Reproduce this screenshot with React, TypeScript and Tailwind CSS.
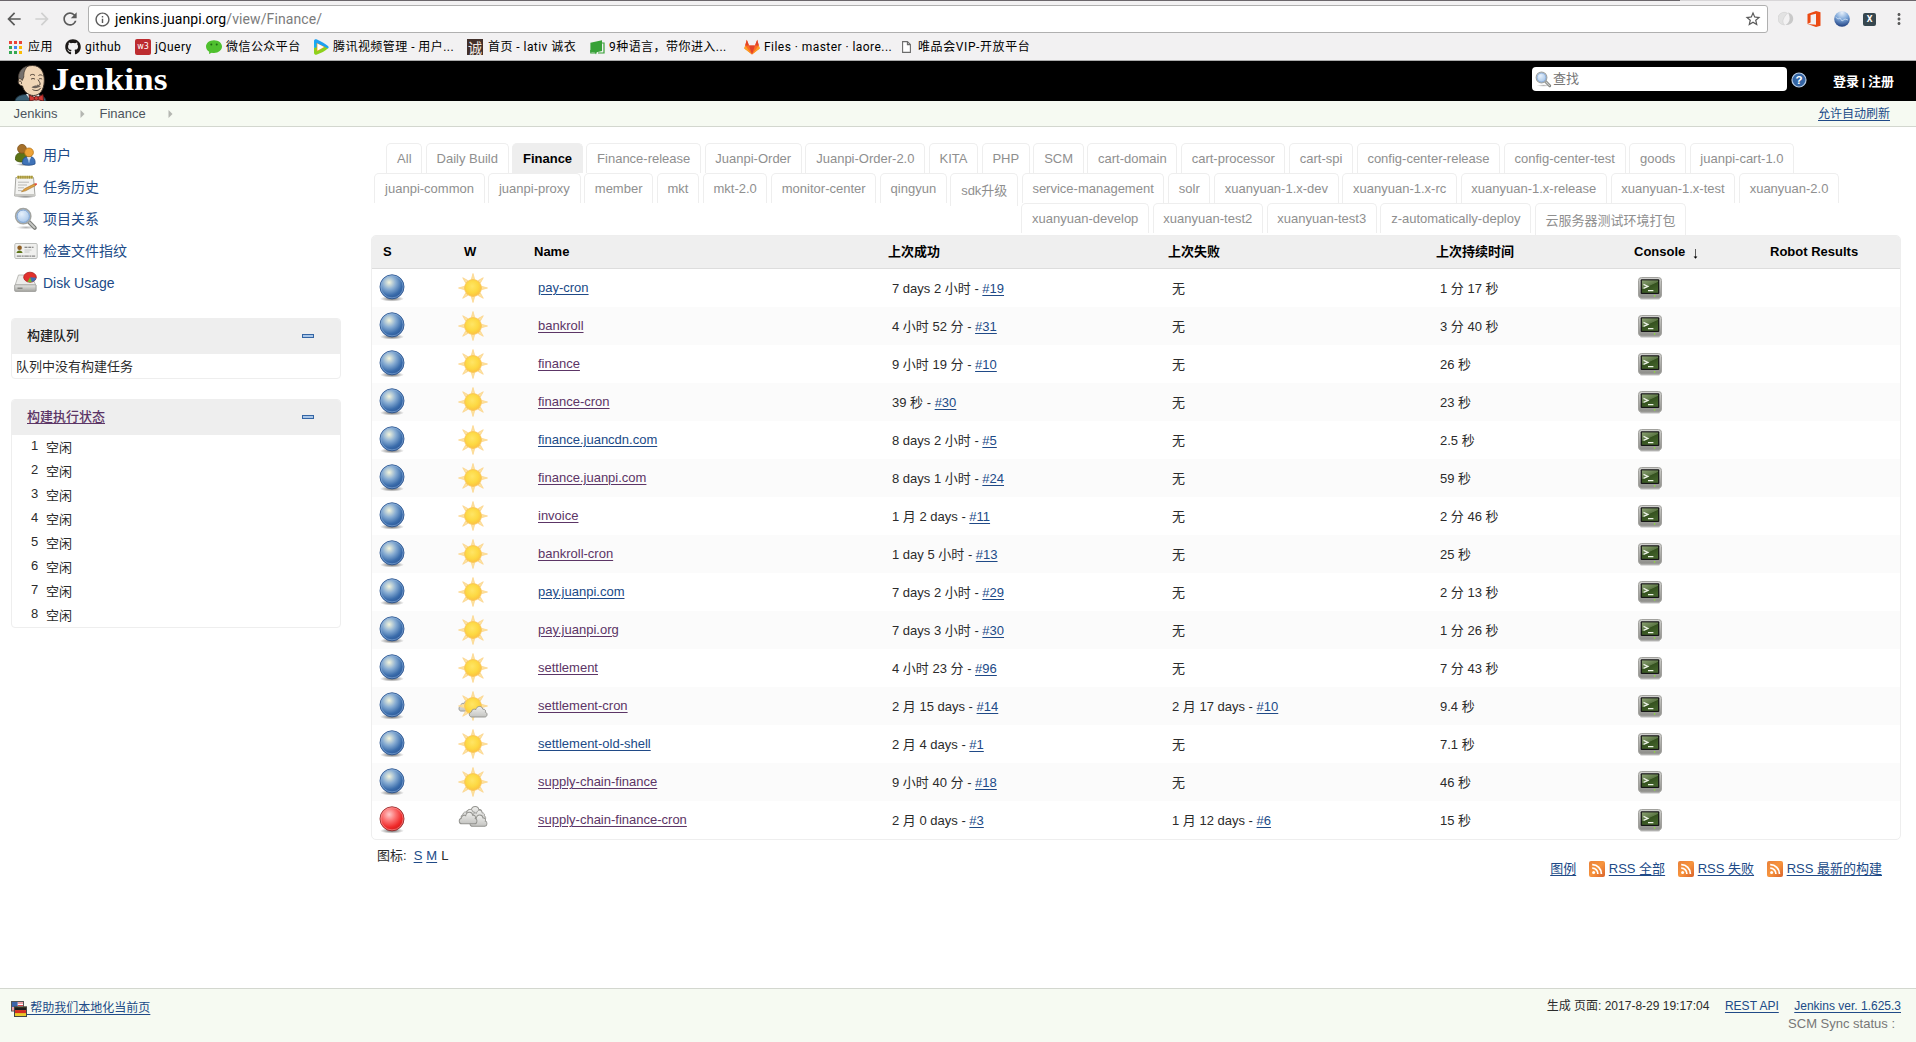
import React from "react";
import { FaGithub } from "react-icons/fa";
import { MdArrowBack, MdArrowForward, MdRefresh, MdOutlineInfo, MdStarBorder, MdMoreVert } from "react-icons/md";

const UI = "font-['Roboto','Noto_Sans_CJK_SC',sans-serif]";

/* ---------- icons ---------- */

const Defs = () => (
  <svg width="0" height="0" className="absolute">
    <defs>
      <radialGradient id="blue" cx="0.38" cy="0.32" r="0.72">
        <stop offset="0" stopColor="#f4f5dc" />
        <stop offset="0.4" stopColor="#86abd2" />
        <stop offset="0.75" stopColor="#3a6cab" />
        <stop offset="1" stopColor="#2a5596" />
      </radialGradient>
      <radialGradient id="red" cx="0.38" cy="0.32" r="0.72">
        <stop offset="0" stopColor="#ffc9c9" />
        <stop offset="0.4" stopColor="#fb6e6e" />
        <stop offset="0.75" stopColor="#ef2929" />
        <stop offset="1" stopColor="#cc1a1a" />
      </radialGradient>
      <radialGradient id="shade" cx="0.5" cy="0.5" r="0.5">
        <stop offset="0" stopColor="#000" stopOpacity="0.6" />
        <stop offset="1" stopColor="#000" stopOpacity="0" />
      </radialGradient>
      <radialGradient id="sun" cx="0.45" cy="0.4" r="0.6">
        <stop offset="0" stopColor="#ffe566" />
        <stop offset="0.6" stopColor="#fdd943" />
        <stop offset="1" stopColor="#fbc23f" />
      </radialGradient>
      <linearGradient id="cloud" x1="0" y1="0" x2="0" y2="1">
        <stop offset="0" stopColor="#f0f0ee" />
        <stop offset="1" stopColor="#c4c4c1" />
      </linearGradient>
      <linearGradient id="screen" x1="0" y1="0" x2="0.6" y2="1">
        <stop offset="0" stopColor="#8ba173" />
        <stop offset="0.5" stopColor="#5d7846" />
        <stop offset="0.55" stopColor="#35521f" />
        <stop offset="1" stopColor="#43632b" />
      </linearGradient>
      <linearGradient id="rss" x1="0" y1="0" x2="1" y2="1">
        <stop offset="0" stopColor="#e8803a" />
        <stop offset="0.5" stopColor="#f7943d" />
        <stop offset="1" stopColor="#d9622b" />
      </linearGradient>
      <linearGradient id="metal" x1="0" y1="0" x2="0" y2="1">
        <stop offset="0" stopColor="#e8e8e6" />
        <stop offset="1" stopColor="#a4a4a0" />
      </linearGradient>
      <linearGradient id="bezel" x1="0" y1="0" x2="0" y2="1">
        <stop offset="0" stopColor="#d2d2cf" />
        <stop offset="1" stopColor="#8c8c88" />
      </linearGradient>
      <radialGradient id="lens" cx="0.4" cy="0.35" r="0.7">
        <stop offset="0" stopColor="#e6f0fb" />
        <stop offset="1" stopColor="#9dbfe6" />
      </radialGradient>
      <radialGradient id="globe" cx="0.5" cy="0.1" r="0.9">
        <stop offset="0" stopColor="#e8f1fb" />
        <stop offset="0.5" stopColor="#7ba5d8" />
        <stop offset="1" stopColor="#1f3f80" />
      </radialGradient>
    </defs>
  </svg>
);

const Ball = ({ red }: { red?: boolean }) => (
  <svg width="28" height="30" viewBox="0 0 28 30">
    <ellipse cx="14" cy="25.8" rx="12" ry="2.8" fill="url(#shade)" />
    <circle cx="14" cy="13.8" r="12" fill={red ? "url(#red)" : "url(#blue)"} stroke={red ? "#8f2a2a" : "#2b5590"} strokeWidth="0.9" />
    <circle cx="14" cy="13.8" r="11.1" fill="none" stroke={red ? "#ff9c9c" : "#8fb3dc"} strokeWidth="0.8" opacity="0.75" />
  </svg>
);

const SunShape = () => (
  <g>
    {[0, 45, 90, 135, 180, 225, 270, 315].map((a) => (
      <path key={a} d="M13.3 6.5 L15 0.5 L16.7 6.5 Z" fill="#fde3a0" stroke="#fcd58c" strokeWidth="0.8" transform={`rotate(${a} 15 15)`} />
    ))}
    <circle cx="15" cy="15" r="8.4" fill="url(#sun)" stroke="#f9c65a" strokeWidth="0.9" />
  </g>
);

const CLOUD = "M4 12 C1 12 0.5 8 3.5 7.2 C3.5 4.6 6.8 4 7.8 5 C8.6 1 14 1 14.6 4.6 C17 4.2 17.8 6.4 17 7.4 C19.6 8 19 12 16.5 12 Z";
const Cloud = ({ t }: { t: string }) => <path d={CLOUD} fill="url(#cloud)" stroke="#93938f" strokeWidth="0.9" transform={t} />;

const Weather = ({ kind }: { kind: string }) => (
  <svg width="30" height="30" viewBox="0 0 30 30">
    {kind === "sun" && <SunShape />}
    {kind === "partly" && (
      <g>
        <Cloud t="translate(-0.2 7.5) scale(0.8 1.05)" />
        <SunShape />
        <Cloud t="translate(9.8 13.4) scale(1.03 1.05)" />
      </g>
    )}
    {kind === "cloud" && (
      <g>
        <Cloud t="translate(4.5 -0.8) scale(1.12 1.2)" />
        <Cloud t="translate(1.8 2.4) scale(0.9 1)" />
        <Cloud t="translate(11.8 3.4) scale(0.85 1)" />
        <Cloud t="translate(10.5 7.8) scale(0.99 1.12)" />
        <Cloud t="translate(-0.3 5) scale(1.03 1.15)" />
      </g>
    )}
  </svg>
);

const Terminal = () => (
  <svg width="24" height="23" viewBox="0 0 24 23">
    <rect x="2" y="19.5" width="20" height="3" rx="1.5" fill="#000" opacity="0.25" />
    <rect x="0.5" y="0.5" width="23" height="20.5" rx="3" fill="url(#bezel)" stroke="#a2a29e" />
    <rect x="2.7" y="2.2" width="18.6" height="14.8" rx="1" fill="#151515" />
    <rect x="3.9" y="3.4" width="16.2" height="12.4" fill="url(#screen)" />
    <path d="M5.5 7.4 L10 9.4 L5.5 11.4 M10 13.6 H15.4" stroke="#eef3e8" strokeWidth="1.2" fill="none" />
    <circle cx="16.6" cy="18.9" r="0.8" fill="#8ae234" />
  </svg>
);

const Rss = () => (
  <svg width="16" height="16" viewBox="0 0 16 16">
    <rect width="16" height="16" rx="2" fill="url(#rss)" />
    <circle cx="4.6" cy="11.6" r="1.5" fill="#fff" />
    <path d="M3.2 7.2 A5.6 5.6 0 0 1 8.9 13 M3.2 3.7 A9.1 9.1 0 0 1 12.4 13" stroke="#fff" strokeWidth="1.7" fill="none" />
  </svg>
);

const Users = () => (
  <svg width="24" height="24" viewBox="0 0 24 24">
    <ellipse cx="12" cy="21.5" rx="10" ry="1.6" fill="url(#shade)" />
    <path d="M1.5 17 C1 11.5 4 9.5 8 9.5 C12 9.5 14 12 14 18 C9 19.5 4 19.5 1.5 17Z" fill="#5c7416" stroke="#42560c" strokeWidth="0.8" />
    <circle cx="8" cy="5.8" r="4.4" fill="#a5702a" stroke="#7d5116" strokeWidth="0.8" />
    <path d="M8.6 21 C8 15.5 10.6 13.5 15 13.5 C19.4 13.5 21.6 16 21 21 C17.5 22.6 12 22.6 8.6 21Z" fill="#3f73b8" stroke="#25518f" strokeWidth="0.8" />
    <path d="M13 13.8 L15 20 L17 13.8Z" fill="#f3f6fa" />
    <path d="M15 14.5 L15.7 18 L15 20 L14.3 18Z" fill="#6f9bd1" />
    <circle cx="15" cy="9.4" r="4.4" fill="#eda338" stroke="#b87414" strokeWidth="0.8" />
  </svg>
);

const Notepad = () => (
  <svg width="24" height="24" viewBox="0 0 24 24">
    <ellipse cx="11.5" cy="21.8" rx="10" ry="1.2" fill="url(#shade)" />
    <path d="M1.8 2.5 H19.5 L21 21 H0.7Z" fill="#f3f3f1" stroke="#a6a6a2" />
    <path d="M1 19 H20.8 V21 H0.7Z" fill="#c9c9c5" />
    <rect x="3" y="0.8" width="16" height="2.8" fill="#c4b45a" />
    <path d="M4.5 .8v2.8M6.7 .8v2.8M8.9 .8v2.8M11.1 .8v2.8M13.3 .8v2.8M15.5 .8v2.8M17.7 .8v2.8" stroke="#8e8030" strokeWidth="0.7" />
    <path d="M4 7.2h11M4 10h9M4 12.8h6M4 15.6h4" stroke="#b9b9b5" strokeWidth="1" />
    <path d="M7.5 16.8 L10.5 13.8 L20.5 8.8 L21.6 10.6 L11.6 15.8Z" fill="#e0a244" stroke="#a06c20" strokeWidth="0.6" />
    <path d="M20.3 8.8 L22.3 8 L23.1 9.4 L21.6 10.6Z" fill="#e5433a" />
  </svg>
);

const Magnifier = ({ size }: { size: number }) => (
  <svg width={size} height={size} viewBox="0 0 24 24" className="shrink-0">
    <ellipse cx="12" cy="20.5" rx="10" ry="1.8" fill="url(#shade)" opacity="0.5" />
    <path d="M14.5 14.5 L20.8 20.8" stroke="#7a7c79" strokeWidth="4" strokeLinecap="round" />
    <path d="M15.5 15.5 L20.6 20.6" stroke="#c9cac7" strokeWidth="1.8" strokeLinecap="round" />
    <circle cx="9.2" cy="9.2" r="7.6" fill="url(#lens)" stroke="#a2a4a1" strokeWidth="1.6" />
    <circle cx="9.2" cy="9.2" r="6.2" fill="none" stroke="#7fa3d1" strokeWidth="1" />
  </svg>
);

const Card = () => (
  <svg width="24" height="24" viewBox="0 0 24 24">
    <rect x="0.8" y="4.5" width="22.4" height="15" rx="1.2" fill="#f0f0ee" stroke="#bcbebb" />
    <path d="M2.5 14 C2.5 10.5 8.5 10.5 8.5 14Z" fill="#5c7416" />
    <circle cx="5.6" cy="8.8" r="2.3" fill="#8f5f24" />
    <path d="M10.5 8.2h9" stroke="#666" strokeWidth="1.1" strokeDasharray="3 0.8" />
    <path d="M10.5 11h7M10.5 13h5" stroke="#c1c2bf" strokeWidth="0.9" />
    <path d="M2.8 17.2h18.4" stroke="#888" strokeWidth="1.3" strokeDasharray="4.5 0.6 1.8 0.6" />
  </svg>
);

const Disk = () => (
  <svg width="24" height="24" viewBox="0 0 24 24">
    <path d="M4.5 4 H17 L22 14.5 H1Z" fill="#ececea" stroke="#b4b4b0" strokeWidth="0.9" />
    <rect x="0.7" y="13.8" width="21.4" height="6.6" rx="0.8" fill="url(#metal)" stroke="#9b9b97" strokeWidth="0.9" />
    <path d="M3.5 17.2 h5" stroke="#70706c" strokeWidth="1.1" />
    <ellipse cx="16" cy="6.2" rx="6.3" ry="5" fill="#e2302d" stroke="#a81f1f" strokeWidth="0.8" />
    <path d="M16 6.2 L22.2 6.8 A6.3 5 0 0 1 17.5 11Z" fill="#3c6fb6" />
    <path d="M16 6.2 L17.8 11 A6.3 5 0 0 1 13.6 10.8Z" fill="#73b62c" />
  </svg>
);

const Flags = () => (
  <svg width="16" height="16" viewBox="0 0 16 16">
    <rect x="0.5" y="0.5" width="12" height="9.5" fill="#fff" stroke="#555" />
    <path d="M6.5 2h5.5M6.5 4.5h5.5M1 7h11M1 9h11" stroke="#d8434a" strokeWidth="1.2" />
    <rect x="1" y="1" width="5.6" height="5" fill="#3a63a8" />
    <rect x="3.5" y="5.8" width="12" height="9.7" fill="#e9c92c" stroke="#444" />
    <rect x="4" y="6.2" width="11" height="3" fill="#1b1b1b" />
    <rect x="4" y="9.1" width="11" height="3" fill="#d42b22" />
  </svg>
);

const Butler = () => (
  <svg width="34" height="37" viewBox="0 0 34 37">
    <path d="M1 37 C2 32.5 6 31 11 30.5 L24 31 C28 31 31 32.5 32 37Z" fill="#3b5f73" stroke="#1d2f3a" strokeWidth="0.9" />
    <path d="M12 30 L17 37 H26 L25 30Z" fill="#e9eef0" />
    <path d="M4.5 16 C4 7 10 1.5 18.5 1.5 C27 1.5 30.5 8.5 30.3 17 C30 26 26 31.5 19.5 31.5 C14 31.5 9.5 27 8.5 22 C5 21.5 3.5 18.5 4.5 16Z" fill="#f0d6b7" stroke="#3a3028" strokeWidth="1" />
    <path d="M4.8 15 C3.5 8.5 8 3 14 2 C10.5 5 9.6 9 9.8 13 L8.2 16.5 C7.4 14.8 5.6 14.4 4.8 15Z" fill="#75706d" stroke="#3a3028" strokeWidth="0.7" />
    <path d="M5 17.5c1.6-1.2 3 .6 2.4 2.4M16 11.5c1.6-1.5 3.6-1.4 5 0M24.5 11.5c1.4-1 2.8-.8 4 .2M17 15.2c1.4-.9 2.8-.9 4 0M25 15c1-.6 2.2-.5 3.2.2M24 15.5c1.6 2.6 3 4.4 1.6 5.6-.8.6-1.8.3-2.6 0M18.5 25.5c2.6 1.6 6.5 1.4 8.2-1.6" stroke="#3a3028" strokeWidth="0.9" fill="none" />
    <path d="M17.5 23.5 C20 20.8 24.5 21.2 27 22.6 C24 24 21 24.8 17.5 23.5Z" fill="#6d625a" />
    <path d="M15 31 L22 34 L29 30.5 L29.5 37 L22.5 35.5 L15.8 37Z" fill="#d33833" stroke="#5a1512" strokeWidth="0.9" />
    <circle cx="22.3" cy="34.3" r="2" fill="#d33833" stroke="#5a1512" strokeWidth="0.8" />
  </svg>
);

const Minus = () => (
  <svg width="12" height="4" viewBox="0 0 12 4">
    <rect x="0.5" y="0.5" width="11" height="3" fill="#a9c6e8" stroke="#3465a4" />
  </svg>
);

const Crumb = () => (
  <svg width="5" height="8" viewBox="0 0 5 8">
    <path d="M0.5 0 L4.5 4 L0.5 8Z" fill="#b4b6b1" />
  </svg>
);

/* ---------- browser chrome ---------- */

const AppsGrid = () => {
  const c = ["#ea4335", "#ea4335", "#ea4335", "#34a853", "#4285f4", "#fbbc05", "#34a853", "#34a853", "#fbbc05"];
  return (
    <svg width="13" height="13" viewBox="0 0 13 13">
      {c.map((f, i) => (
        <rect key={i} x={(i % 3) * 5} y={Math.floor(i / 3) * 5} width="3" height="3" fill={f} />
      ))}
    </svg>
  );
};

const Wechat = () => (
  <svg width="16" height="16" viewBox="0 0 16 16">
    <path d="M8 1.2 C12.6 1.2 16 4 16 7.6 C16 11.2 12.6 14 8 14 C7.2 14 6.4 13.9 5.7 13.8 L3 15 L3.2 12.8 C1.2 11.6 0 9.7 0 7.6 C0 4 3.4 1.2 8 1.2Z" fill="#4fc02e" />
    <circle cx="5.3" cy="5.6" r="1" fill="#1f6a12" />
    <circle cx="10.7" cy="5.6" r="1" fill="#1f6a12" />
  </svg>
);

const Tencent = () => (
  <svg width="16" height="16" viewBox="0 0 16 16">
    <path d="M1 2 C1 .4 2.6 0 4 .6 C8 2.4 12 4.6 15 7 C16 7.8 15.8 8.8 15 9.4 L9 9 L1.5 8Z" fill="#1ea1f2" />
    <path d="M1 2 L1.2 12 L5 8Z" fill="#12b0f5" />
    <path d="M15 9.3 C12 12 8 14.2 4 15.6 C2.4 16.2 1.2 15.4 1 14 L1 9 L9 7Z" fill="#8ed11c" />
    <path d="M3.6 4 L12 8 L3.8 12.6Z" fill="#f79a1c" />
    <path d="M4.4 4.6 L11 8.1 L4.4 11.8Z" fill="#fff" />
  </svg>
);

const Gitlab = () => (
  <svg width="16" height="16" viewBox="0 0 16 16">
    <path d="M8 15.4 L0.3 9.6 L2.8 0.8 L5 6.4 H11 L13.2 0.8 L15.7 9.6Z" fill="#fc6d26" />
    <path d="M8 15.4 L5 6.4 H11Z" fill="#e24329" />
    <path d="M8 15.4 L0.3 9.6 L1.2 6.4Z M8 15.4 L15.7 9.6 L14.8 6.4Z" fill="#fca326" />
    <path d="M1.2 6.4 L2.8 0.8 L5 6.4Z M14.8 6.4 L13.2 0.8 L11 6.4Z" fill="#e24329" />
  </svg>
);

const bookmarks: { icon: React.ReactNode; label: string; box: string }[] = [
  { icon: <AppsGrid />, label: "应用", box: "w-[56px] gap-[6px]" },
  { icon: <FaGithub size={16} color="#1b1817" />, label: "github", box: "w-[70px] gap-[4px]" },
  {
    icon: (
      <span className="flex size-4 items-center justify-center rounded-[2px] bg-[#bd2c30] font-['DejaVu_Sans'] text-[8px] leading-none tracking-normal text-white">w3</span>
    ),
    label: "jQuery",
    box: "w-[71px] gap-[4px]",
  },
  { icon: <Wechat />, label: "微信公众平台", box: "w-[107px] gap-[4px]" },
  { icon: <Tencent />, label: "腾讯视频管理 - 用户...", box: "w-[154px] gap-[4px]" },
  {
    icon: (
      <span className="flex size-4 items-center justify-center bg-[#42302a] font-['Noto_Sans_CJK_SC'] text-[14px] leading-[16px] tracking-normal text-[#efe9e4]">诚</span>
    ),
    label: "首页 - lativ 诚衣",
    box: "w-[123px] gap-[5px]",
  },
  {
    icon: (
      <svg width="15" height="15" viewBox="0 0 15 15">
        <path d="M11 3 H14 V13 H8 M0.8 10 V13 H6" fill="none" stroke="#37a137" strokeWidth="1.2" />
        <path d="M0.4 2.8 L12 0.2 V11 L6.8 12.2 L6 14.6 L5 12.5 L0.4 12Z" fill="#37a137" />
      </svg>
    ),
    label: "9种语言，带你进入...",
    box: "w-[154px] gap-[4px]",
  },
  { icon: <Gitlab />, label: "Files · master · laore...", box: "w-[158px] gap-[4px]" },
  {
    icon: (
      <svg width="9" height="12" viewBox="0 0 9 12">
        <path d="M0.6 0.6 H5.4 L8.4 3.6 V11.4 H0.6Z M5.4 0.6 V3.6 H8.4" fill="#fff" stroke="#6b6b6b" strokeWidth="1.1" />
      </svg>
    ),
    label: "唯品会VIP-开放平台",
    box: "gap-[7px] tracking-[0.6px]",
  },
];

const Browser = () => (
  <div className={`${UI} h-[61px] border-b border-[#ababab] bg-[#f2f1f2]`}>
    <div className="flex h-px">
      <div className="w-[1680px] bg-[#6b666b]" />
      <div className="w-[160px] bg-[#d8d6d8]" />
      <div className="flex-1 bg-[#6b666b]" />
    </div>
    <div className="flex h-[36px] items-center text-[#5a5a5a]">
      <div className="flex w-[88px] items-center gap-[8px] pl-[4px]">
        <MdArrowBack size={20} />
        <MdArrowForward size={20} className="text-[#d0d0d0]" />
        <MdRefresh size={20} />
      </div>
      <div className="flex h-[28px] w-[1680px] items-center rounded-[3px] border border-[#b0b0b0] bg-white pr-[5px] pl-[5px]">
        <MdOutlineInfo size={17} />
        <span className="ml-[4px] flex-1 text-[14px] leading-[20px] tracking-[0.1px] text-[#7b7b7b]">
          <span className="text-black">jenkins.juanpi.org</span>/view/Finance/
        </span>
        <MdStarBorder size={18} />
      </div>
      <div className="flex items-center pl-[10px]">
        <svg width="16" height="16" viewBox="0 0 16 16" className="mr-[13px]">
          <path d="M9.5 2.2 A6 6 0 0 0 3 13 L6.5 14 C4.6 12 4.4 10 5.4 8 C6.3 6 7.6 4 9.5 2.2Z" fill="#e2e2e2" stroke="#cfcfcf" strokeWidth="0.6" />
          <path d="M10 1.5 C14 2.5 16 6 15 9.5 C14 12.6 11 14.4 7.5 14 C10 12.6 11.6 10.4 11.6 7.6 C11.6 5.4 11 3.4 10 1.5Z" fill="#c9c9c9" />
        </svg>
        <svg width="14" height="16" viewBox="0 0 14 16" className="mr-[13px]">
          <path d="M0.5 3 L9 0 L13.5 1.3 V14.7 L9 16 L0.5 13 L9 13.8 V2.8 L3.6 4.1 V11.6 L0.5 13Z" fill="#eb4b14" />
        </svg>
        <svg width="16" height="16" viewBox="0 0 16 16" className="mr-[13px]">
          <circle cx="8" cy="8" r="7.8" fill="url(#globe)" />
          <path d="M1.5 6 L4 8 L6 7 L8 10 L11 8 L14 9" stroke="#dbe8f7" fill="none" opacity="0.7" />
        </svg>
        <span className="mr-[14px] flex size-[13px] items-center justify-center rounded-[2px] bg-[#37474f] text-[9px] leading-none font-bold text-white">X</span>
        <MdMoreVert size={18} />
      </div>
    </div>
    <div className="flex h-[20px] items-center pl-[9px] text-[12px] leading-[20px] tracking-[0.45px] text-black">
      {bookmarks.map((b) => (
        <div key={b.label} className={`${b.box} flex shrink-0 items-center whitespace-nowrap`}>
          <span className="shrink-0">{b.icon}</span>
          <span>{b.label}</span>
        </div>
      ))}
    </div>
  </div>
);

/* ---------- page data ---------- */

const tabRows: string[][] = [
  ["All", "Daily Build", "Finance", "Finance-release", "Juanpi-Order", "Juanpi-Order-2.0", "KITA", "PHP", "SCM", "cart-domain", "cart-processor", "cart-spi", "config-center-release", "config-center-test", "goods", "juanpi-cart-1.0"],
  ["juanpi-common", "juanpi-proxy", "member", "mkt", "mkt-2.0", "monitor-center", "qingyun", "sdk升级", "service-management", "solr", "xuanyuan-1.x-dev", "xuanyuan-1.x-rc", "xuanyuan-1.x-release", "xuanyuan-1.x-test", "xuanyuan-2.0"],
  ["xuanyuan-develop", "xuanyuan-test2", "xuanyuan-test3", "z-automatically-deploy", "云服务器测试环境打包"],
];
const rowPad = ["pl-[15.4px]", "pl-[3.4px]", "pl-[650.4px]"];

type Job = { n: string; v?: boolean; ok: [string, string]; bad?: [string, string]; d: string; w?: string; red?: boolean };
const jobs: Job[] = [
  { n: "pay-cron", ok: ["7 days 2 小时", "#19"], d: "1 分 17 秒" },
  { n: "bankroll", v: true, ok: ["4 小时 52 分", "#31"], d: "3 分 40 秒" },
  { n: "finance", v: true, ok: ["9 小时 19 分", "#10"], d: "26 秒" },
  { n: "finance-cron", v: true, ok: ["39 秒", "#30"], d: "23 秒" },
  { n: "finance.juancdn.com", ok: ["8 days 2 小时", "#5"], d: "2.5 秒" },
  { n: "finance.juanpi.com", v: true, ok: ["8 days 1 小时", "#24"], d: "59 秒" },
  { n: "invoice", v: true, ok: ["1 月 2 days", "#11"], d: "2 分 46 秒" },
  { n: "bankroll-cron", v: true, ok: ["1 day 5 小时", "#13"], d: "25 秒" },
  { n: "pay.juanpi.com", ok: ["7 days 2 小时", "#29"], d: "2 分 13 秒" },
  { n: "pay.juanpi.org", v: true, ok: ["7 days 3 小时", "#30"], d: "1 分 26 秒" },
  { n: "settlement", v: true, ok: ["4 小时 23 分", "#96"], d: "7 分 43 秒" },
  { n: "settlement-cron", v: true, ok: ["2 月 15 days", "#14"], bad: ["2 月 17 days", "#10"], d: "9.4 秒", w: "partly" },
  { n: "settlement-old-shell", ok: ["2 月 4 days", "#1"], d: "7.1 秒" },
  { n: "supply-chain-finance", v: true, ok: ["9 小时 40 分", "#18"], d: "46 秒" },
  { n: "supply-chain-finance-cron", v: true, ok: ["2 月 0 days", "#3"], bad: ["1 月 12 days", "#6"], d: "15 秒", w: "cloud", red: true },
];

const COLS = "grid grid-cols-[81px_70px_355px_280px_268px_197px_136px_1fr] items-center";
const link = "text-[#204a87] underline underline-offset-2";

const Build = ({ b }: { b: [string, string] }) => (
  <span>
    {b[0]} - <a className={link}>{b[1]}</a>
  </span>
);

const tasks = [
  { icon: <Users />, label: "用户" },
  { icon: <Notepad />, label: "任务历史" },
  { icon: <Magnifier size={24} />, label: "项目关系" },
  { icon: <Card />, label: "检查文件指纹" },
  { icon: <Disk />, label: "Disk Usage" },
];

const Sidebar = () => (
  <aside className="w-[371px] shrink-0 pl-[11px]">
    <nav className="pt-[12px]">
      {tasks.map((t) => (
        <div key={t.label} className="flex h-8 items-center gap-[5px] pl-[3px] text-[14px] text-[#204a87]">
          {t.icon}
          <span>{t.label}</span>
        </div>
      ))}
    </nav>
    <section className="mt-[19px] w-[330px] overflow-hidden rounded border border-[#eee]">
      <div className="flex h-[35px] items-center justify-between bg-[#eee] pr-[26px] pb-px pl-[15px] font-medium text-[#222]">
        构建队列
        <Minus />
      </div>
      <div className="h-[24px] pl-[4px] leading-[25px]">队列中没有构建任务</div>
    </section>
    <section className="mt-[20px] w-[330px] overflow-hidden rounded border border-[#eee]">
      <div className="flex h-[35px] items-center justify-between bg-[#eee] pr-[26px] pb-px pl-[15px] font-medium">
        <a className="text-[#5c3566] underline underline-offset-2">构建执行状态</a>
        <Minus />
      </div>
      <div className="h-[192px]">
        {[1, 2, 3, 4, 5, 6, 7, 8].map((n) => (
          <div key={n} className="flex h-[24px] pl-[19px] leading-[22px]">
            <span className="w-[15px]">{n}</span>
            <span className="pt-[2px]">空闲</span>
          </div>
        ))}
      </div>
    </section>
  </aside>
);

const tabClass = (label: string) => {
  if (label === "Finance") return "h-[30px] border-[#eee] bg-[#eee] font-bold text-black";
  if (label === "sdk升级") return "h-[33px] border-[#eee] pt-[2px] text-[#8f8f8f]";
  if (label.startsWith("云")) return "h-[32px] border-[#eee] pt-[2px] text-[#8f8f8f]";
  return "h-[30px] border-[#eee] text-[#8f8f8f]";
};

const Tabs = () => (
  <div className="pt-[16px]">
    {tabRows.map((row, i) => (
      <div key={i} className={`${rowPad[i]} flex h-[30px] items-start gap-[3.6px]`}>
        {row.map((t) => (
          <span key={t} className={`${tabClass(t)} rounded-t-[5px] border border-b-0 px-[9.71px] leading-[29px] whitespace-nowrap`}>
            {t}
          </span>
        ))}
      </div>
    ))}
  </div>
);

export default function App() {
  return (
    <div className="flex h-[1042px] w-[1916px] flex-col overflow-hidden bg-white font-['Liberation_Sans','Noto_Sans_CJK_SC',sans-serif] text-[13px] leading-[18px] text-[#2b2b2b]">
      <Defs />
      <Browser />

      <header className="flex h-[40px] items-start bg-black">
        <div className="flex h-[40px] w-[1532px] items-end pl-[14px]">
          <Butler />
          <svg width="122" height="40" viewBox="0 0 122 40" className="ml-[2px]">
            <text x="1.5" y="28.8" textLength="116" lengthAdjust="spacingAndGlyphs" fill="#fff" fontFamily="Liberation Serif" fontWeight="700" fontSize="31">
              Jenkins
            </text>
          </svg>
        </div>
        <div className="mt-[6px] flex h-[24px] w-[255px] items-center gap-px rounded-[4px] bg-white pl-[3px] text-[#757575]">
          <Magnifier size={17} />
          查找
        </div>
        <svg width="16" height="16" viewBox="0 0 16 16" className="mt-[11px] ml-[4px]">
          <circle cx="8" cy="8" r="7" fill="#3465a4" stroke="#b9cde6" strokeWidth="1.2" />
          <text x="8" y="12" textAnchor="middle" fill="#fff" fontFamily="Liberation Sans" fontWeight="700" fontSize="11.5">
            ?
          </text>
        </svg>
        <div className="ml-[26px] flex h-[42px] items-center gap-[3px] font-bold text-white">
          <span>登录</span>
          <span className="text-[11px]">|</span>
          <span>注册</span>
        </div>
      </header>

      <div className="flex h-[26px] items-center border-b border-[#d3d7cf] bg-[#f6faf2] pr-[26px] pl-[13.5px] text-[#4d545d]">
        <span className="w-[66.5px]">Jenkins</span>
        <Crumb />
        <span className="ml-[14.5px] w-[68.5px]">Finance</span>
        <Crumb />
        <a className={`${link} ml-auto text-[12px]`}>允许自动刷新</a>
      </div>

      <div className="flex h-[861px]">
        <Sidebar />
        <main className="w-[1530px]">
          <Tabs />
          <div className="mt-[2px] rounded-[5px] border border-[#eee]">
            <div className={`${COLS} h-[33px] rounded-t-[4px] border-b border-[#ddd] bg-[#efefef] pl-[11px] font-bold text-black`}>
              <span>S</span>
              <span>W</span>
              <span>Name</span>
              <span className="-ml-px">上次成功</span>
              <span className="-ml-px">上次失败</span>
              <span className="-ml-px">上次持续时间</span>
              <span className="flex items-center gap-[8px]">
                Console
                <svg width="5" height="10" viewBox="0 0 5 10" className="mt-[3px]">
                  <path d="M2.5 0 V9" stroke="#333" strokeWidth="0.8" />
                  <path d="M0.6 7.4 H4.4 L2.5 9.8Z" fill="#000" />
                </svg>
              </span>
              <span>Robot Results</span>
            </div>
            {jobs.map((j, i) => (
              <div key={j.n} className={`${COLS} h-[38px] pl-[6px] ${i % 2 ? "bg-[#fbfbfb]" : ""}`}>
                <Ball red={j.red} />
                <span className="-ml-px">
                  <Weather kind={j.w ?? "sun"} />
                </span>
                <span className="pl-[9px]">
                  <a className={`${j.v ? "text-[#5c3566]" : "text-[#204a87]"} underline underline-offset-2`}>{j.n}</a>
                </span>
                <span className="pt-px pl-[8px]">
                  <Build b={j.ok} />
                </span>
                <span className="pt-px pl-[8px]">{j.bad ? <Build b={j.bad} /> : "无"}</span>
                <span className="pt-px pl-[8px]">{j.d}</span>
                <span className="pl-[9px]">
                  <Terminal />
                </span>
                <span />
              </div>
            ))}
          </div>
          <div className="flex justify-between">
            <div className="flex gap-[4px] pt-[7px] pl-[6px]">
              <span className="mr-[3px]">图标: </span>
              <a className={link}>S</a>
              <a className={link}>M</a>
              <span>L</span>
            </div>
            <div className="flex items-center gap-[12.6px] pt-[20px] pr-[19px]">
              <a className={link}>图例</a>
              {["RSS 全部", "RSS 失败", "RSS 最新的构建"].map((t) => (
                <span key={t} className="flex items-center gap-[4px]">
                  <Rss />
                  <a className={link}>{t}</a>
                </span>
              ))}
            </div>
          </div>
        </main>
      </div>

      <footer className="flex h-[54px] justify-between border-t border-[#d3d7cf] bg-[#f6faf2] pr-[15px] pl-[11px] text-[12px]">
        <div className="flex items-start pt-[12px]">
          <Flags />
          <a className={`${link} -mt-[2px] whitespace-pre`}> 帮助我们本地化当前页</a>
        </div>
        <div className="pt-[8px] text-right">
          <div className="flex gap-[15.5px]">
            <span>生成 页面: 2017-8-29 19:17:04</span>
            <a className={link}>REST API</a>
            <a className={link}>Jenkins ver. 1.625.3</a>
          </div>
          <div className="pr-[6px] text-[13px] text-[#777]">SCM Sync status :</div>
        </div>
      </footer>
    </div>
  );
}
